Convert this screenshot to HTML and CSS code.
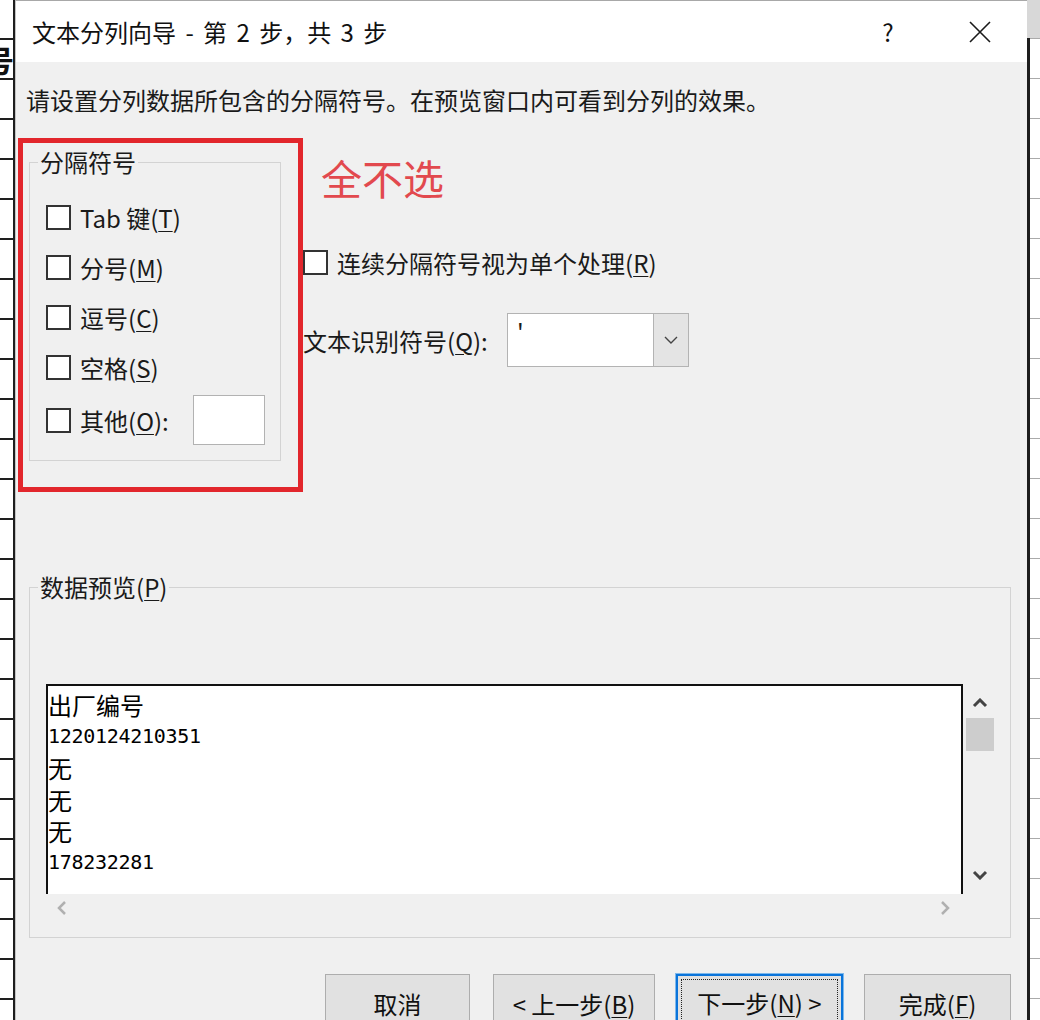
FILE: index.html
```html
<!DOCTYPE html>
<html lang="zh-CN">
<head>
  <meta charset="UTF-8">
  <meta name="viewport" content="width=device-width, initial-scale=1.0">
  <title>文本分列向导 - 第 2 步，共 3 步</title>
  <link rel="stylesheet" href="styles.css">
</head>
<body>
  <div class="sheet sheet-left">
    <span class="cell-text">号</span>
  </div>

  <div class="dialog">
    <div class="titlebar">
      <span class="title">文本分列向导 - 第 2 步，共 3 步</span>
      <span class="help">?</span>
      <span class="close">
        <svg width="22" height="22" viewBox="0 0 22 22"><path d="M1 1 L21 21 M21 1 L1 21" stroke="#1a1a1a" stroke-width="1.6" fill="none"/></svg>
      </span>
    </div>

    <p class="intro">请设置分列数据所包含的分隔符号。在预览窗口内可看到分列的效果。</p>

    <div class="options">
      <div class="highlight">
        <fieldset class="group delimiters">
          <legend>分隔符号</legend>
          <div class="check"><span class="box"></span><span>Tab 键(<u>T</u>)</span></div>
          <div class="check"><span class="box"></span><span>分号(<u>M</u>)</span></div>
          <div class="check"><span class="box"></span><span>逗号(<u>C</u>)</span></div>
          <div class="check"><span class="box"></span><span>空格(<u>S</u>)</span></div>
          <div class="check other"><span class="box"></span><span>其他(<u>O</u>):</span><span class="text-field"></span></div>
        </fieldset>
      </div>

      <div class="side">
        <div class="note">全不选</div>
        <div class="check single"><span class="box"></span><span>连续分隔符号视为单个处理(<u>R</u>)</span></div>
        <div class="qualifier">
          <span class="qualifier-label">文本识别符号(<u>Q</u>):</span>
          <div class="select">
            <span class="value">'</span>
            <span class="drop">
              <svg width="14" height="9" viewBox="0 0 14 9"><path d="M1 1 L7 7 L13 1" stroke="#444" stroke-width="1.4" fill="none"/></svg>
            </span>
          </div>
        </div>
      </div>
    </div>

    <fieldset class="group preview">
      <legend>数据预览(<u>P</u>)</legend>
      <div class="listbox">
        <div class="list-text">
          <div>出厂编号</div>
          <div class="num">1220124210351</div>
          <div>无</div>
          <div>无</div>
          <div>无</div>
          <div class="num">178232281</div>
        </div>
        <div class="vscroll">
          <svg class="arrow" width="16" height="10" viewBox="0 0 16 10"><path d="M2 8 L8 2 L14 8" stroke="#444" stroke-width="3" fill="none"/></svg>
          <div class="thumb"></div>
          <svg class="arrow down" width="16" height="10" viewBox="0 0 16 10"><path d="M2 2 L8 8 L14 2" stroke="#444" stroke-width="3" fill="none"/></svg>
        </div>
        <div class="hscroll">
          <svg width="10" height="16" viewBox="0 0 10 16"><path d="M8 2 L2 8 L8 14" stroke="#b0b0b0" stroke-width="2.5" fill="none"/></svg>
          <svg width="10" height="16" viewBox="0 0 10 16"><path d="M2 2 L8 8 L2 14" stroke="#b0b0b0" stroke-width="2.5" fill="none"/></svg>
        </div>
      </div>
    </fieldset>

    <div class="buttons">
      <div class="btn cancel">取消</div>
      <div class="btn back">&lt; 上一步(<u>B</u>)</div>
      <div class="btn next"><span class="focus">下一步(<u>N</u>) &gt;</span></div>
      <div class="btn finish">完成(<u>F</u>)</div>
    </div>
  </div>

  <div class="sheet sheet-right">
    <div class="sheet-head"></div>
    <div class="sheet-body"></div>
  </div>
</body>
</html>
```

FILE: styles.css
```css
body {
  margin: 0;
  height: 1020px;
  overflow: hidden;
  display: flex;
  background: #fff;
  font-family: "Noto Sans CJK SC", "Noto Sans", sans-serif;
  font-size: 24px;
  color: #1a1a1a;
}
u {
  text-decoration-thickness: 1px;
  text-underline-offset: 3px;
}

/* spreadsheet behind the dialog */
.sheet {
  flex: none;
  overflow: hidden;
}
.sheet-left {
  width: 13px;
  border-right: 2px solid #1e1e1e;
  background: repeating-linear-gradient(to bottom, #fff 0 38px, #1e1e1e 38px 40px);
}
.cell-text {
  display: block;
  margin: 40px 0 0 -16px;
  height: 38px;
  line-height: 38px;
  font-size: 30px;
  font-weight: bold;
  background: #fff;
  color: #111;
}
.sheet-right {
  width: 13px;
  display: flex;
  flex-direction: column;
}
.sheet-head {
  height: 38px;
  background: #d8d8d8;
}
.sheet-body {
  flex: 1;
  border-left: 3px solid #1e1e1e;
  background: repeating-linear-gradient(to bottom, #aaa 0 1px, #fff 1px 40px);
}

/* dialog */
.dialog {
  flex: none;
  width: 1012px;
  box-sizing: border-box;
  display: flex;
  flex-direction: column;
  background: #f0f0f0;
  border-left: 1px solid #c4c4c4;
  border-top: 1px solid #a8a8a8;
}
.dialog > * {
  flex: none;
}
.titlebar {
  height: 61px;
  display: flex;
  align-items: center;
  padding: 0 16px 0 16px;
  background: #fff;
}
.title {
  color: #111;
  word-spacing: 4px;
}
.help {
  margin-left: auto;
  margin-right: 41px;
  width: 40px;
  text-align: center;
  font-size: 24px;
  color: #111;
}
.close {
  width: 62px;
  display: flex;
  justify-content: center;
  align-items: center;
}
.intro {
  margin: 22px 0 0 10px;
  line-height: 32px;
}

.options {
  display: flex;
  margin: 22px 0 0 2px;
}
.highlight {
  flex: none;
  width: 285px;
  height: 354px;
  box-sizing: border-box;
  border: 5px solid #e2262c;
  padding: 3px 0 0 6px;
}

.group {
  margin: 0;
  border: 1px solid #d3d3d3;
  min-width: 0;
}
.group legend {
  margin-left: -8px;
  padding: 0 2px;
  line-height: 32px;
}
.delimiters {
  width: 252px;
  box-sizing: border-box;
  padding: 14px 15px 12px 16px;
}
.check {
  display: flex;
  align-items: center;
  height: 50px;
  color: #1a1a1a;
}
.check.other {
  height: 56px;
}
.box {
  flex: none;
  width: 25px;
  height: 25px;
  box-sizing: border-box;
  border: 2px solid #333;
  background: #fff;
  margin-right: 9px;
}
.text-field {
  margin-left: auto;
  width: 72px;
  height: 50px;
  box-sizing: border-box;
  border: 1px solid #b2b2b2;
  background: #fff;
}

.side {
  display: flex;
  flex-direction: column;
}
.note {
  margin: 14px 0 0 18px;
  font-size: 41px;
  line-height: 50px;
  color: #e2494e;
}
.check.single {
  height: 30px;
  margin-top: 45px;
}
.qualifier {
  display: flex;
  align-items: center;
  margin-top: 36px;
  height: 54px;
}
.qualifier-label {
  width: 204px;
}
.select {
  width: 182px;
  height: 54px;
  box-sizing: border-box;
  display: flex;
  border: 1px solid #b3b3b3;
  background: #fff;
}
.value {
  flex: 1;
  padding: 4px 0 0 9px;
  line-height: 32px;
}
.drop {
  width: 34px;
  display: flex;
  align-items: center;
  justify-content: center;
  background: #e4e4e4;
  border-left: 1px solid #b3b3b3;
}

.preview {
  width: 982px;
  box-sizing: border-box;
  margin: 79px 0 0 13px;
  padding: 81px 15px 15px 16px;
}
.listbox {
  display: grid;
  grid-template-columns: 1fr 32px;
  grid-template-rows: 210px 28px;
}
.list-text {
  border: 2px solid #111;
  border-bottom: none;
  background: #fff;
  padding-top: 3px;
  line-height: 31.6px;
  color: #000;
}
.num {
  font-family: "DejaVu Sans Mono", monospace;
  font-size: 20px;
  letter-spacing: -0.3px;
}
.vscroll {
  display: flex;
  flex-direction: column;
  align-items: center;
  padding: 14px 0 14px 2px;
}
.thumb {
  margin-top: 10px;
  width: 28px;
  height: 33px;
  background: #cdcdcd;
}
.arrow.down {
  margin-top: auto;
}
.hscroll {
  display: flex;
  justify-content: space-between;
  align-items: center;
  padding: 0 13px 0 11px;
}

.buttons {
  display: flex;
  justify-content: flex-end;
  gap: 21px;
  margin-top: 36px;
  padding-right: 16px;
}
.btn {
  flex: none;
  height: 58px;
  box-sizing: border-box;
  display: flex;
  align-items: center;
  justify-content: center;
  background: #e1e1e1;
  border: 1px solid #adadad;
  color: #111;
}
.cancel {
  width: 145px;
  margin-right: 2px;
}
.back {
  width: 162px;
}
.next {
  width: 167px;
  border: 2px solid #0a74da;
  box-shadow: 0 0 0 1px #7db8ec;
  padding: 4px;
  align-items: stretch;
}
.focus {
  flex: 1;
  display: flex;
  align-items: center;
  justify-content: center;
  outline: 1px dotted #222;
  padding-bottom: 2px;
}
.finish {
  width: 147px;
}
```
